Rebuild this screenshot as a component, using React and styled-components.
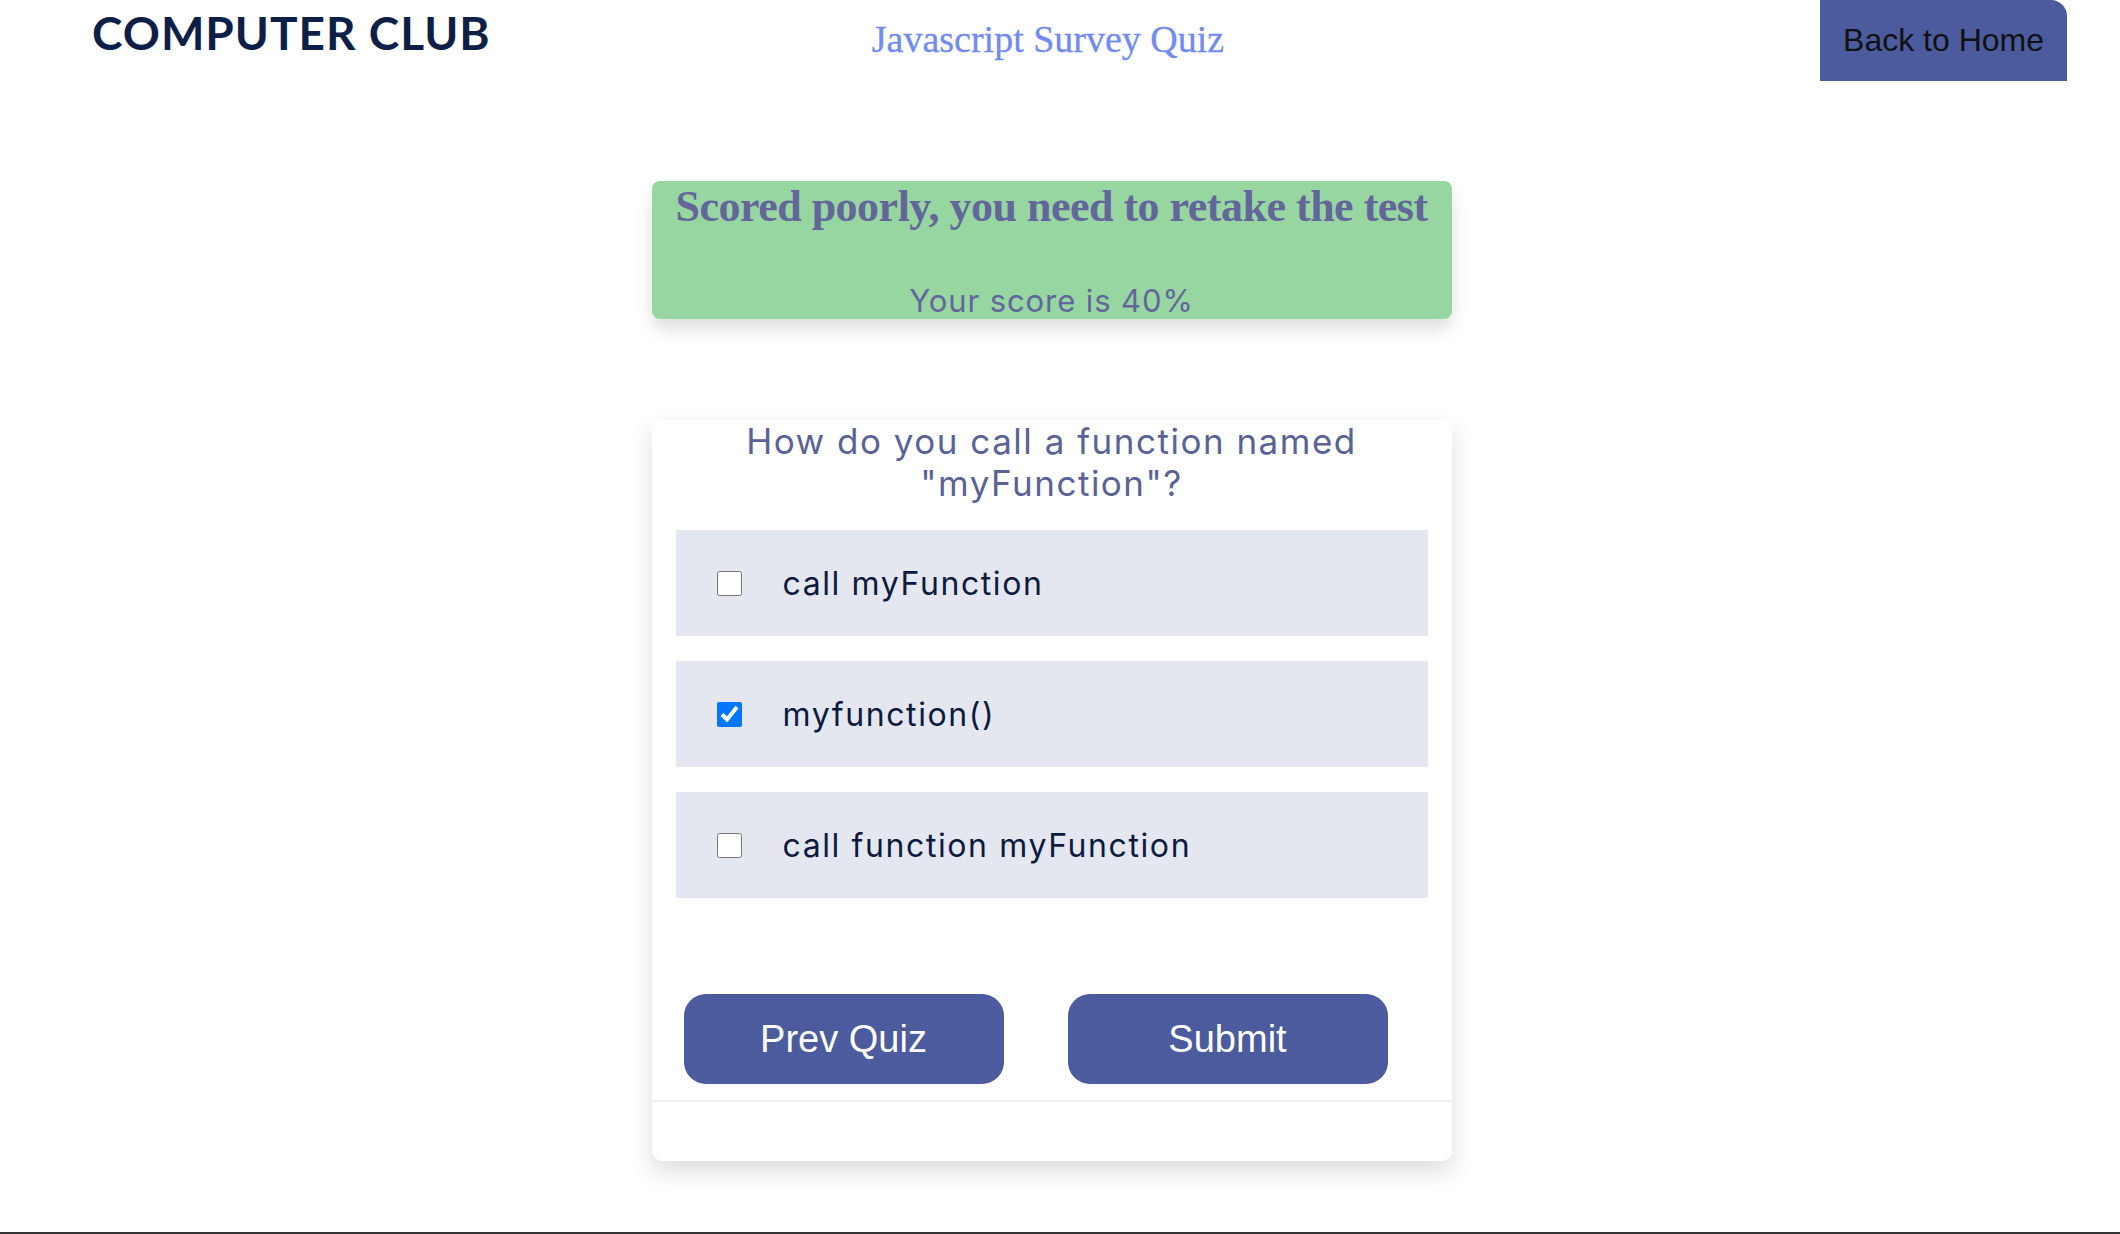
import React from "react";
import styled, { createGlobalStyle } from "styled-components";

const Global = createGlobalStyle`
  html, body { margin: 0; padding: 0; background: #fff; overflow: hidden; }
  * { box-sizing: border-box; }
`;

const Page = styled.div`
  width: 2120px;
  padding-right: 17px;
  min-height: 1234px;
  display: flex;
  flex-direction: column;
  font-family: Inter, "Open Sans", sans-serif;
`;

const Header = styled.header`
  display: grid;
  grid-template-columns: 1fr auto 1fr;
  align-items: start;
  padding: 0 36px 0 29px;
  height: 81px;
`;

const Logo = styled.div`
  margin: 10px 0 0 63px;
  font-family: Lato, "Open Sans", sans-serif;
  font-weight: 700;
  font-size: 46px;
  line-height: 1;
  letter-spacing: 1px;
  color: #0d1f47;
  white-space: nowrap;
`;

const Title = styled.h1`
  margin: 20px 0 0;
  font-family: "Liberation Serif", "DejaVu Serif", serif;
  font-weight: 400;
  font-size: 38px;
  line-height: 1;
  color: #728af4;
  white-space: nowrap;
  -webkit-text-stroke: 0.3px #728af4;
`;

const HomeButton = styled.button`
  justify-self: end;
  height: 81px;
  padding: 0 23px;
  border: none;
  border-top-right-radius: 16px;
  background: #4b5b9d;
  color: #111;
  font-family: "Liberation Sans", Arial, sans-serif;
  font-size: 32px;
  display: flex;
  align-items: center;
`;

const Main = styled.main`
  width: 800px;
  margin: 100px auto 0;
  display: flex;
  flex-direction: column;
`;

const ScoreBox = styled.section`
  background: #97d6a0;
  border-radius: 8px;
  box-shadow: 0 10px 18px rgba(0, 0, 0, 0.13);
  display: flex;
  flex-direction: column;
  align-items: center;
  gap: 50px;
  color: #62669a;
`;

const ScoreTitle = styled.h2`
  margin: 0;
  font-family: "Liberation Serif", "DejaVu Serif", serif;
  font-weight: 700;
  font-size: 44px;
  line-height: 52px;
  letter-spacing: -0.5px;
  white-space: nowrap;
`;

const ScoreText = styled.p`
  margin: 0;
  font-size: 31px;
  line-height: 36px;
  letter-spacing: 0.9px;
`;

const Card = styled.section`
  margin-top: 101px;
  background: #fff;
  border-radius: 10px;
  box-shadow: 0 10px 24px rgba(0, 0, 0, 0.14);
  display: flex;
  flex-direction: column;
`;

const Question = styled.h3`
  margin: 0 auto;
  max-width: 680px;
  text-align: center;
  font-weight: 400;
  font-size: 35px;
  line-height: 42px;
  letter-spacing: 1.5px;
  color: #5b6396;
`;

const Options = styled.div`
  margin-top: 26px;
  padding: 0 24px;
  display: flex;
  flex-direction: column;
  gap: 25px;
`;

const Option = styled.label`
  height: 106px;
  background: #e4e7ef;
  display: flex;
  align-items: center;
  padding-left: 41px;
  gap: 41px;
  font-size: 32px;
  letter-spacing: 1.6px;
  color: #0c1a3d;
`;

const Check = styled.input`
  width: 25px;
  height: 25px;
  margin: 0;
  flex: none;
`;

const Actions = styled.div`
  margin-top: 96px;
  padding: 0 32px 16px;
  display: flex;
  gap: 64px;
  border-bottom: 2px solid #efefef;
`;

const ActionButton = styled.button`
  width: 320px;
  height: 90px;
  border: none;
  border-radius: 22px;
  background: #4b5b9d;
  color: #fff;
  font-family: "Liberation Sans", Arial, sans-serif;
  font-size: 38px;
`;

const CardFoot = styled.div`
  height: 59px;
`;

const Footer = styled.footer`
  margin-top: auto;
  height: 2px;
  background: #333;
  margin-right: -17px;
`;

const options = [
  { label: "call myFunction", checked: false },
  { label: "myfunction()", checked: true },
  { label: "call function myFunction", checked: false },
];

export default function App() {
  return (
    <>
      <Global />
      <Page>
        <Header>
          <Logo>COMPUTER CLUB</Logo>
          <Title>Javascript Survey Quiz</Title>
          <HomeButton>Back to Home</HomeButton>
        </Header>
        <Main>
          <ScoreBox>
            <ScoreTitle>Scored poorly, you need to retake the test</ScoreTitle>
            <ScoreText>Your score is 40%</ScoreText>
          </ScoreBox>
          <Card>
            <Question>How do you call a function named "myFunction"?</Question>
            <Options>
              {options.map((o) => (
                <Option key={o.label}>
                  <Check type="checkbox" defaultChecked={o.checked} />
                  {o.label}
                </Option>
              ))}
            </Options>
            <Actions>
              <ActionButton>Prev Quiz</ActionButton>
              <ActionButton>Submit</ActionButton>
            </Actions>
            <CardFoot />
          </Card>
        </Main>
        <Footer />
      </Page>
    </>
  );
}
